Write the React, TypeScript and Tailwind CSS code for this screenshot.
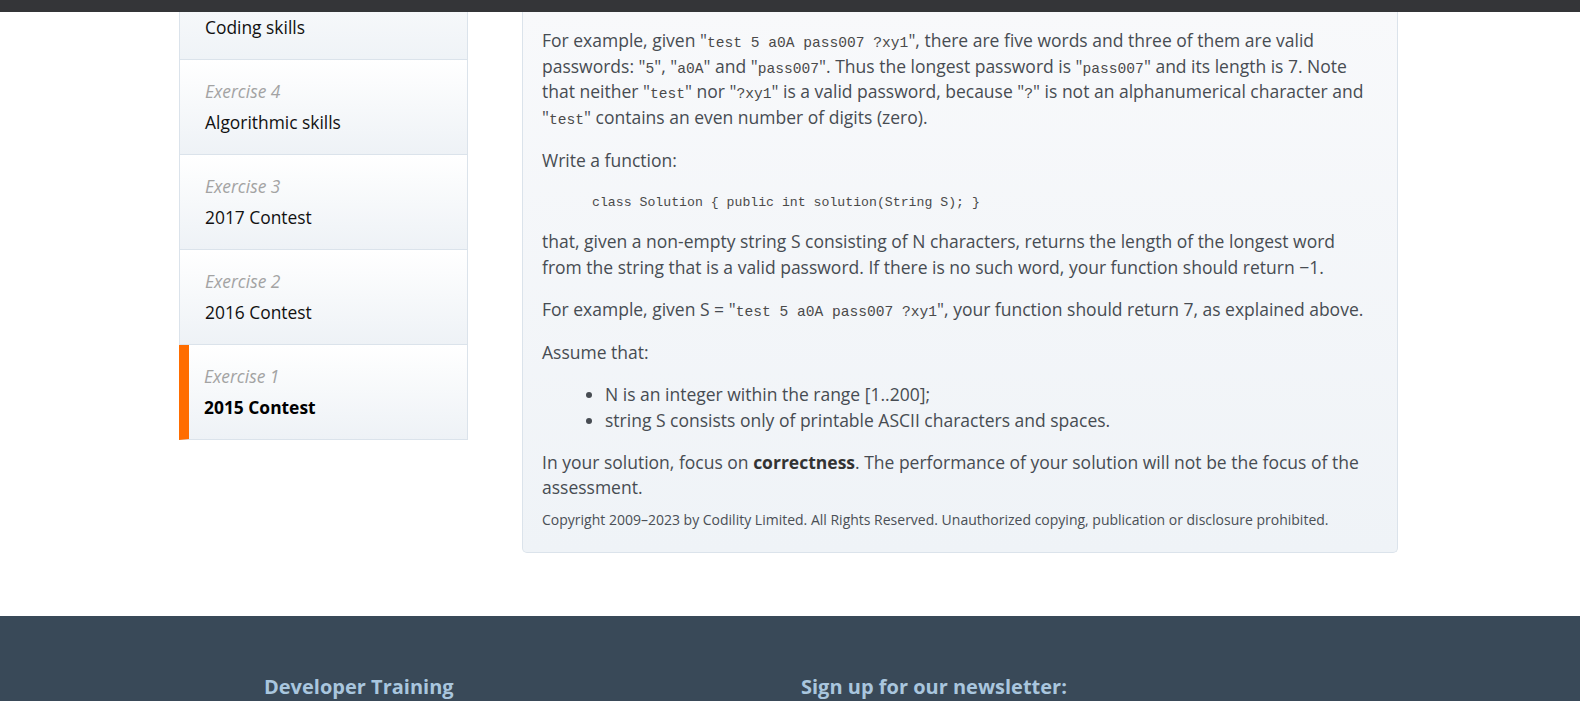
const exercises = [
  { label: "Exercise 4", title: "Algorithmic skills" },
  { label: "Exercise 3", title: "2017 Contest" },
  { label: "Exercise 2", title: "2016 Contest" },
];

const mono = "font-['Liberation_Mono',monospace] text-[14.6px] leading-none text-[#4a4a4a]";

const App = () => {
  return (
    <div className="min-h-screen bg-white font-['Open_Sans',sans-serif]">
      <div className="h-[12px] bg-[#343538]" />

      <div className="flex items-start ml-[179px]">
        {/* Sidebar */}
        <div className="w-[289px] flex flex-col">
          <div className="h-[48px] border-x border-b border-[#dbe3eb] bg-gradient-to-b from-[#f6f8fa] to-[#eff3f7] pl-[25px] pt-[3px]">
            <div className="text-[17.4px] leading-[25px] text-[#111]">Coding skills</div>
          </div>
          {exercises.map((ex) => (
            <div
              key={ex.label}
              className="border-x border-b border-[#dbe3eb] bg-gradient-to-b from-white to-[#eef2f6] pl-[25px] pt-[19px] pb-[19px]"
            >
              <div className="text-[17.4px] leading-[25px] italic text-[#a3a3a3]">{ex.label}</div>
              <div className="mt-[6px] text-[17.4px] leading-[25px] text-[#111]">{ex.title}</div>
            </div>
          ))}
          <div className="border-l-[10px] border-l-[#ff6d00] border-r border-b border-[#dbe3eb] bg-gradient-to-b from-white to-[#eef2f6] pl-[15px] pt-[19px] pb-[19px]">
            <div className="text-[17.4px] leading-[25px] italic text-[#a3a3a3]">Exercise 1</div>
            <div className="mt-[6px] text-[17.4px] leading-[25px] font-bold text-black">2015 Contest</div>
          </div>
        </div>

        {/* Task description */}
        <div className="ml-[54px] w-[876px] border-x border-b border-[#dbe3eb] rounded-b-[5px] bg-gradient-to-b from-[#f8f9fb] to-[#eff3f7] px-[19px] pt-[16px] pb-[22px] text-[17.5px] leading-[25.6px] text-[#474c52]">
          <p>
            For example, given "<span className={mono}>test 5 a0A pass007 ?xy1</span>", there are five words and three of them are valid
            passwords: "<span className={mono}>5</span>", "<span className={mono}>a0A</span>" and "<span className={mono}>pass007</span>". Thus the longest password is "<span className={mono}>pass007</span>" and its length is 7. Note
            that neither "<span className={mono}>test</span>" nor "<span className={mono}>?xy1</span>" is a valid password, because "<span className={mono}>?</span>" is not an alphanumerical character and
            "<span className={mono}>test</span>" contains an even number of digits (zero).
          </p>
          <p className="mt-[18px]">Write a function:</p>
          <pre className="mt-[19px] mb-[16px] pl-[50px] font-['Liberation_Mono',monospace] text-[13.2px] leading-[20px] text-[#4a4a4a]">
            class Solution {"{"} public int solution(String S); {"}"}
          </pre>
          <p>
            that, given a non-empty string S consisting of N characters, returns the length of the longest word from the string that is a valid password. If there is no such word, your function should return −1.
          </p>
          <p className="mt-[17px]">
            For example, given S = "<span className={mono}>test 5 a0A pass007 ?xy1</span>", your function should return 7, as explained above.
          </p>
          <p className="mt-[17px]">Assume that:</p>
          <ul className="mt-[17px] list-disc pl-[63px]">
            <li>N is an integer within the range [1..200];</li>
            <li>string S consists only of printable ASCII characters and spaces.</li>
          </ul>
          <p className="mt-[16px]">
            In your solution, focus on <b className="font-bold text-[#333]">correctness</b>. The performance of your solution will not be the focus of the assessment.
          </p>
          <p className="mt-[9px] text-[14px] leading-[20px] text-[#4a4f55]">
            Copyright 2009–2023 by Codility Limited. All Rights Reserved. Unauthorized copying, publication or disclosure prohibited.
          </p>
        </div>
      </div>

      {/* Footer */}
      <div className="mt-[63px] bg-[#394958] h-[120px] pt-[57px]">
        <div className="flex">
          <h3 className="ml-[264px] w-[537px] text-[20px] leading-[28px] font-bold text-[#a9c6de]">Developer Training</h3>
          <h3 className="text-[20px] leading-[28px] font-bold text-[#a9c6de]">Sign up for our newsletter:</h3>
        </div>
      </div>
    </div>
  );
};

export default App;
